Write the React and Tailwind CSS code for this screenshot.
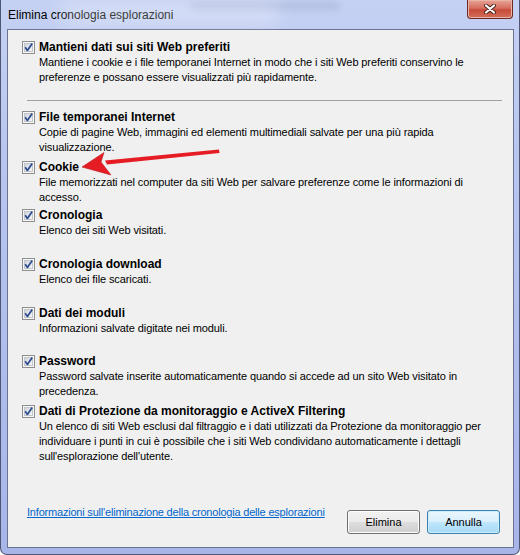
import React from "react";

function Check() {
  return (
    <svg width="13" height="13" viewBox="0 0 13 13" className="shrink-0">
      <defs>
        <linearGradient id="cbfill" x1="0" y1="0" x2="1" y2="1">
          <stop offset="0" stopColor="#cfd3da" />
          <stop offset="1" stopColor="#f7f8fa" />
        </linearGradient>
      </defs>
      <rect x="0.5" y="0.5" width="12" height="12" fill="#f6f6f6" stroke="#8e8f8f" />
      <rect x="2.5" y="2.5" width="8" height="8" fill="url(#cbfill)" stroke="#c3c6cc" />
      <path d="M3.2 6.3 L5.4 9.4 L10.2 2.6" fill="none" stroke="#2c4a8e" strokeWidth="1.7" strokeLinejoin="round" />
    </svg>
  );
}

const items = [
  {
    title: "File temporanei Internet",
    lines: ["Copie di pagine Web, immagini ed elementi multimediali salvate per una più rapida", "visualizzazione."],
    h: "h-[50px]",
  },
  {
    title: "Cookie",
    lines: ["File memorizzati nel computer da siti Web per salvare preferenze come le informazioni di", "accesso."],
    h: "h-[48px]",
  },
  { title: "Cronologia", lines: ["Elenco dei siti Web visitati."], h: "h-[49px]" },
  { title: "Cronologia download", lines: ["Elenco dei file scaricati."], h: "h-[49px]" },
  { title: "Dati dei moduli", lines: ["Informazioni salvate digitate nei moduli."], h: "h-[48px]" },
  {
    title: "Password",
    lines: ["Password salvate inserite automaticamente quando si accede ad un sito Web visitato in", "precedenza."],
    h: "h-[50px]",
  },
  {
    title: "Dati di Protezione da monitoraggio e ActiveX Filtering",
    lines: [
      "Un elenco di siti Web esclusi dal filtraggio e i dati utilizzati da Protezione da monitoraggio per",
      "individuare i punti in cui è possibile che i siti Web condividano automaticamente i dettagli",
      "sull'esplorazione dell'utente.",
    ],
    h: "",
  },
];

function Item({ title, lines, h }) {
  return (
    <div className={`flex ${h}`}>
      <div className="ml-[14px] mr-[4px] mt-[2px]">
        <Check />
      </div>
      <div>
        <div className="text-[12px] font-bold leading-[16px] whitespace-nowrap">{title}</div>
        {lines.map((l) => (
          <div key={l} className="text-[11px] leading-[15px] tracking-[-0.1px] whitespace-nowrap">
            {l}
          </div>
        ))}
      </div>
    </div>
  );
}

export default function App() {
  return (
    <div className="relative w-[520px] h-[555px] overflow-hidden font-['Liberation_Sans',Arial,sans-serif] text-black">
      <div className="flex h-full flex-col rounded-b-[7px] border-x border-b border-[#4f5674] bg-[linear-gradient(180deg,#c5d1f3_0%,#b7c5ef_30%,#aebcec_70%,#a8b5e9_100%)] pl-[6px] pr-[5px] pb-[6px]">
        {/* title bar */}
        <div className="flex h-[29px] items-center pl-[1px] text-[12px]">Elimina cronologia esplorazioni</div>

        {/* client area */}
        <div className="flex flex-1 flex-col border border-[#6b7391] bg-[#f0f0f0] pt-[9px]">
          <Item
            title="Mantieni dati sui siti Web preferiti"
            lines={[
              "Mantiene i cookie e i file temporanei Internet in modo che i siti Web preferiti conservino le",
              "preferenze e possano essere visualizzati più rapidamente.",
            ]}
            h=""
          />
          <div className="mt-[15px] mb-[8px] ml-[19px] mr-[11px] h-px bg-[#a0a0a0]" />
          {items.map((it) => (
            <Item key={it.title} {...it} />
          ))}

          <div className="mt-auto flex items-start justify-between pl-[19px] pr-[13px] pb-[13px]">
            <span className="text-[11px] leading-[16px] tracking-[-0.2px] text-[#0066cc] underline">
              Informazioni sull'eliminazione della cronologia delle esplorazioni
            </span>
            <div className="mt-[6px] flex gap-[7px]">
              <button className="h-[24px] w-[73px] rounded-[3px] border border-[#707070] bg-[linear-gradient(180deg,#f2f2f2_0%,#ebebeb_48%,#dddddd_52%,#cfcfcf_100%)] text-[11px] shadow-[inset_0_0_0_1px_#fcfcfc]">
                Elimina
              </button>
              <button className="h-[24px] w-[73px] rounded-[3px] border border-[#3c7fb1] bg-[linear-gradient(180deg,#eaf6fd_0%,#d9f0fc_48%,#bee6fd_52%,#a7d9f5_100%)] text-[11px] shadow-[inset_0_0_0_1px_#cdeefc]">
                Annulla
              </button>
            </div>
          </div>
        </div>
      </div>

      {/* aero glass ghosts */}
      <div className="pointer-events-none absolute left-[190px] top-[2px] h-[8px] w-[150px] rounded-full bg-[#9aa6c8] opacity-40 blur-[3px]" />
      <div className="pointer-events-none absolute left-[60px] top-[0px] h-[26px] w-[220px] rounded-full bg-white opacity-25 blur-[8px]" />

      {/* close button */}
      <div className="absolute right-[7px] top-0 flex h-[19px] w-[46px] items-center justify-center rounded-b-[4px] border border-t-0 border-[#6e2a22] bg-[linear-gradient(180deg,#e6a497_0%,#d46e5f_45%,#c84a38_55%,#d0705c_100%)] shadow-[inset_0_0_0_1px_#eab3a8]">
        <svg width="12" height="10" viewBox="0 0 12 10">
          <path d="M2 1.5 L10 8.5 M10 1.5 L2 8.5" stroke="#4a1e18" strokeWidth="4" strokeLinecap="round" />
          <path d="M2 1.5 L10 8.5 M10 1.5 L2 8.5" stroke="#ffffff" strokeWidth="2.2" strokeLinecap="round" />
        </svg>
      </div>

      {/* red arrow */}
      <svg className="pointer-events-none absolute left-0 top-0" width="520" height="555">
        <polygon points="219,149.5 219.5,153 107,164.5 105,160.5" fill="#e61c24" />
        <polygon points="82,167 104,152.5 101,162 111,175" fill="#e61c24" stroke="#c0141b" strokeWidth="0.6" strokeLinejoin="round" />
      </svg>
    </div>
  );
}
